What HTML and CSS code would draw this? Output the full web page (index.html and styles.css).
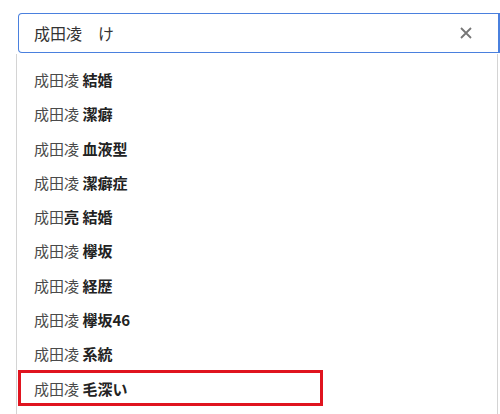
FILE: index.html
```html
<!DOCTYPE html>
<html lang="ja">
<head>
  <meta charset="UTF-8" />
  <title>検索候補</title>
  <link rel="stylesheet" href="styles.css">
</head>
<body>

<div class="search">
  <div class="search-box">
    <span class="query">成田凌　け</span>
    <svg class="clear" width="14" height="14" viewBox="0 0 14 14">
      <path d="M2 2 L12 12 M12 2 L2 12" stroke="#767676" stroke-width="1.8" fill="none" />
    </svg>
  </div>

  <ul class="suggestions">
    <li>成田凌 <b>結婚</b></li>
    <li>成田凌 <b>潔癖</b></li>
    <li>成田凌 <b>血液型</b></li>
    <li>成田凌 <b>潔癖症</b></li>
    <li>成田<b>亮</b> <b>結婚</b></li>
    <li>成田凌 <b>欅坂</b></li>
    <li>成田凌 <b>経歴</b></li>
    <li>成田凌 <b>欅坂46</b></li>
    <li>成田凌 <b>系統</b></li>
    <li class="marked">成田凌 <b>毛深い</b></li>
  </ul>
</div>

</body>
</html>
```

FILE: styles.css
```css
body {
  margin: 0;
  background: #fff;
  font-family: "Noto Sans CJK JP", "Noto Sans", sans-serif;
  color: #3c3c3c;
}
.search {
  padding: 13px 0 0 16px;
}
.search-box {
  margin-left: 2px;
  height: 40px;
  box-sizing: border-box;
  border: 1.5px solid #4a80de;
  border-right-width: 2px;
  border-radius: 4px 0 0 4px;
  display: flex;
  align-items: center;
  justify-content: space-between;
  padding: 0 25px 0 15px;
}
.query {
  font-size: 16px;
  color: #333;
}
.clear {
  display: block;
}
.suggestions {
  list-style: none;
  margin: 1px 0 0;
  padding: 9px 0 0;
  width: 482px;
  box-sizing: border-box;
  border-left: 1px solid #d4d4d4;
  border-right: 1px solid #d4d4d4;
  height: 360px;
}
.suggestions li {
  height: 34.3px;
  line-height: 34.3px;
  padding-left: 17px;
  font-size: 15px;
  color: #4a4a4a;
}
.suggestions b {
  color: #222;
  font-weight: 700;
}
.suggestions li.marked {
  position: relative;
}
.suggestions li.marked::after {
  content: "";
  position: absolute;
  top: -2px;
  left: 1px;
  width: 305px;
  height: 36px;
  box-sizing: border-box;
  border: 3px solid #e0141f;
}
```
